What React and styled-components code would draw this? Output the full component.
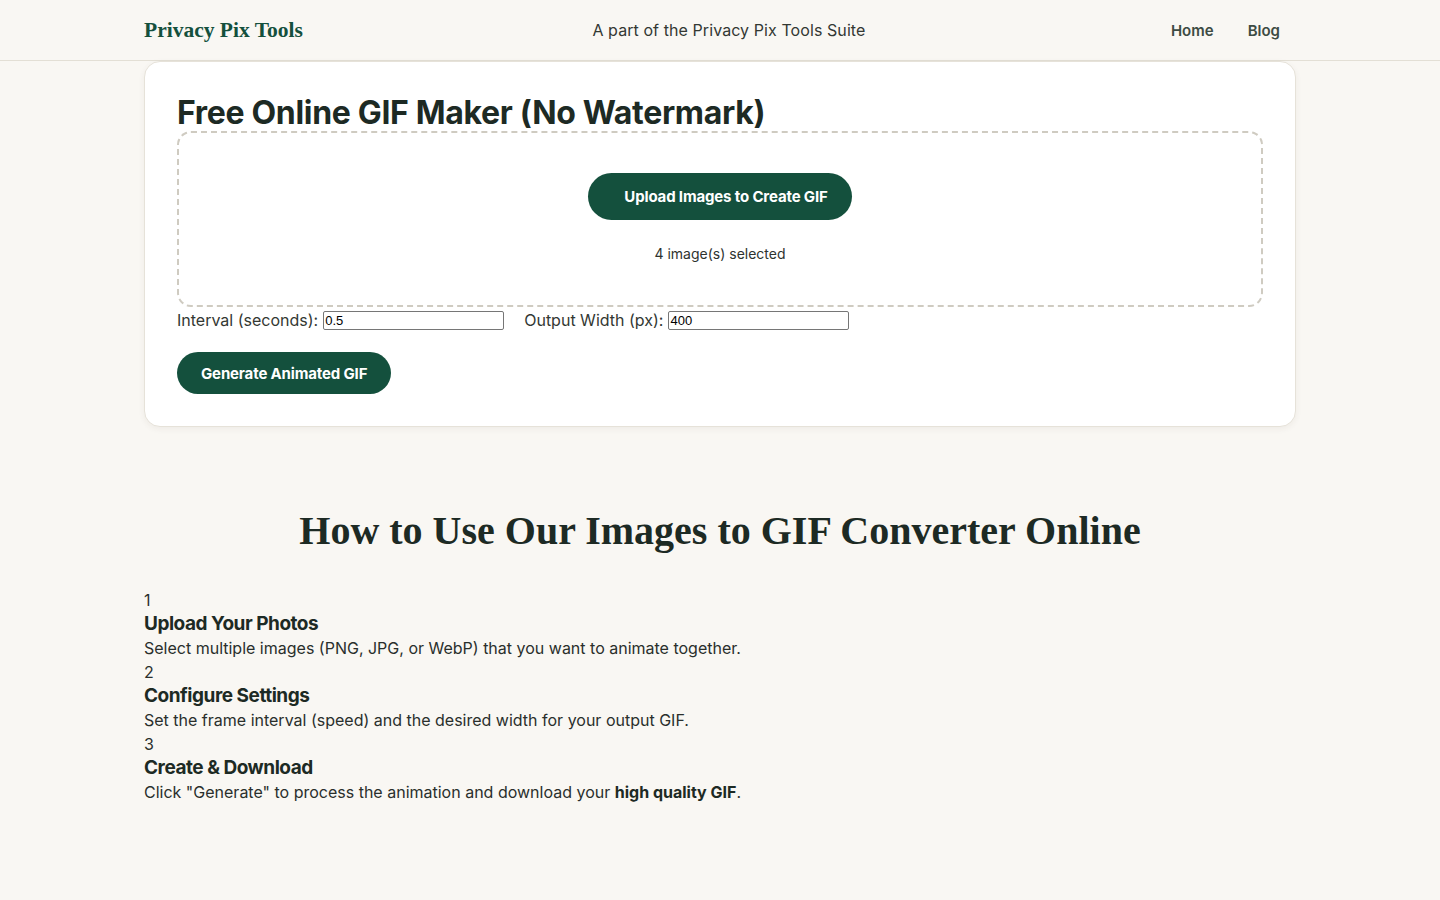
import React from "react";
import styled, { createGlobalStyle } from "styled-components";

const GlobalStyle = createGlobalStyle`
  html, body {
    margin: 0;
    padding: 0;
    background: #f9f7f3;
    color: #2a2f2c;
    font-family: Inter, "Noto Sans", sans-serif;
  }
  * {
    box-sizing: border-box;
  }
`;

const green = "#14503d";

const Header = styled.header`
  height: 61px;
  border-bottom: 1px solid #e3dfd5;
  display: flex;
  justify-content: center;
`;

const HeaderInner = styled.div`
  width: 1152px;
  display: flex;
  justify-content: space-between;
  align-items: center;
`;

const Logo = styled.a`
  font-family: "Liberation Serif", "DejaVu Serif", serif;
  font-weight: 700;
  font-size: 21.5px;
  color: ${green};
  text-decoration: none;
`;

const Tagline = styled.div`
  font-size: 16px;
  color: #333833;
  letter-spacing: 0.005em;
`;

const Nav = styled.nav`
  display: flex;
  gap: 2px;
`;

const NavLink = styled.a`
  padding: 0 16px;
  font-size: 15px;
  font-weight: 600;
  color: #3d4b43;
  text-decoration: none;
`;

const Main = styled.main`
  width: 1152px;
  margin: 0 auto;
`;

const Card = styled.section`
  background: #fff;
  border: 1px solid #e6e2d9;
  border-radius: 16px;
  box-shadow: 0 2px 6px rgba(60, 50, 30, 0.06);
  padding: 32px;
`;

const Title = styled.h1`
  margin: 0;
  font-size: 32px;
  line-height: 37px;
  font-weight: 700;
  color: #1d2a24;
  letter-spacing: -0.01em;
`;

const DropZone = styled.div`
  border: 2px dashed #cfcbc1;
  border-radius: 14px;
  padding: 40px;
  display: flex;
  flex-direction: column;
  align-items: center;
`;

const PillButton = styled.button`
  border: none;
  border-radius: 999px;
  background: ${green};
  color: #fff;
  font-family: Inter, sans-serif;
  font-size: 15px;
  font-weight: 700;
  letter-spacing: -0.01em;
  height: ${(p) => (p.$large ? "47px" : "42px")};
  padding: ${(p) => (p.$large ? "0 24px 0 36px" : "0 24px")};
  cursor: pointer;
`;

const Selected = styled.p`
  margin: 23px 0 0;
  font-size: 14px;
  line-height: 22px;
  color: #2e332f;
`;

const Settings = styled.div`
  display: flex;
  align-items: center;
  gap: 20px;
  margin-top: 3px;
`;

const Field = styled.label`
  display: flex;
  align-items: center;
  gap: 5px;
  font-size: 16px;
  color: #333833;
`;

const NumberInput = styled.input`
  width: 181px;
  height: 19px;
  padding: 1px 1px;
  border: 1px solid #767676;
  border-radius: 2px;
  font-family: "Liberation Sans", Arial, sans-serif;
  font-size: 13px;
  color: #000;
`;

const Actions = styled.div`
  margin-top: 22px;
`;

const HowTo = styled.section`
  padding-top: 76px;
`;

const HowTitle = styled.h2`
  margin: 0 0 30px;
  text-align: center;
  font-family: "Liberation Serif", "DejaVu Serif", serif;
  font-size: 40px;
  line-height: 56px;
  font-weight: 700;
  color: #1d2a24;
`;

const Steps = styled.ol`
  list-style: none;
  margin: 0;
  padding: 0;
  display: flex;
  flex-direction: column;
  gap: 1px;
`;

const Step = styled.li`
  display: flex;
  flex-direction: column;
`;

const StepNumber = styled.span`
  font-size: 16px;
  line-height: 23px;
  color: #2a2f2c;
`;

const StepTitle = styled.h3`
  margin: 0;
  font-size: 19px;
  line-height: 24px;
  font-weight: 700;
  letter-spacing: -0.025em;
  color: #1d2a24;
`;

const StepText = styled.p`
  margin: 0;
  font-size: 16px;
  line-height: 24px;
  color: #2a2f2c;
  b {
    font-weight: 700;
    color: #1d2a24;
  }
`;

const steps = [
  {
    title: "Upload Your Photos",
    text: "Select multiple images (PNG, JPG, or WebP) that you want to animate together.",
  },
  {
    title: "Configure Settings",
    text: "Set the frame interval (speed) and the desired width for your output GIF.",
  },
  {
    title: "Create & Download",
    text: (
      <>
        Click "Generate" to process the animation and download your{" "}
        <b>high quality GIF</b>.
      </>
    ),
  },
];

export default function App() {
  return (
    <>
      <GlobalStyle />
      <Header>
        <HeaderInner>
          <Logo href="#">Privacy Pix Tools</Logo>
          <Tagline>A part of the Privacy Pix Tools Suite</Tagline>
          <Nav>
            <NavLink href="#">Home</NavLink>
            <NavLink href="#">Blog</NavLink>
          </Nav>
        </HeaderInner>
      </Header>
      <Main>
        <Card>
          <Title>Free Online GIF Maker (No Watermark)</Title>
          <DropZone>
            <PillButton $large>Upload Images to Create GIF</PillButton>
            <Selected>4 image(s) selected</Selected>
          </DropZone>
          <Settings>
            <Field>
              Interval (seconds):
              <NumberInput defaultValue="0.5" />
            </Field>
            <Field>
              Output Width (px):
              <NumberInput defaultValue="400" />
            </Field>
          </Settings>
          <Actions>
            <PillButton>Generate Animated GIF</PillButton>
          </Actions>
        </Card>
        <HowTo>
          <HowTitle>How to Use Our Images to GIF Converter Online</HowTitle>
          <Steps>
            {steps.map((s, i) => (
              <Step key={s.title}>
                <StepNumber>{i + 1}</StepNumber>
                <StepTitle>{s.title}</StepTitle>
                <StepText>{s.text}</StepText>
              </Step>
            ))}
          </Steps>
        </HowTo>
      </Main>
    </>
  );
}
